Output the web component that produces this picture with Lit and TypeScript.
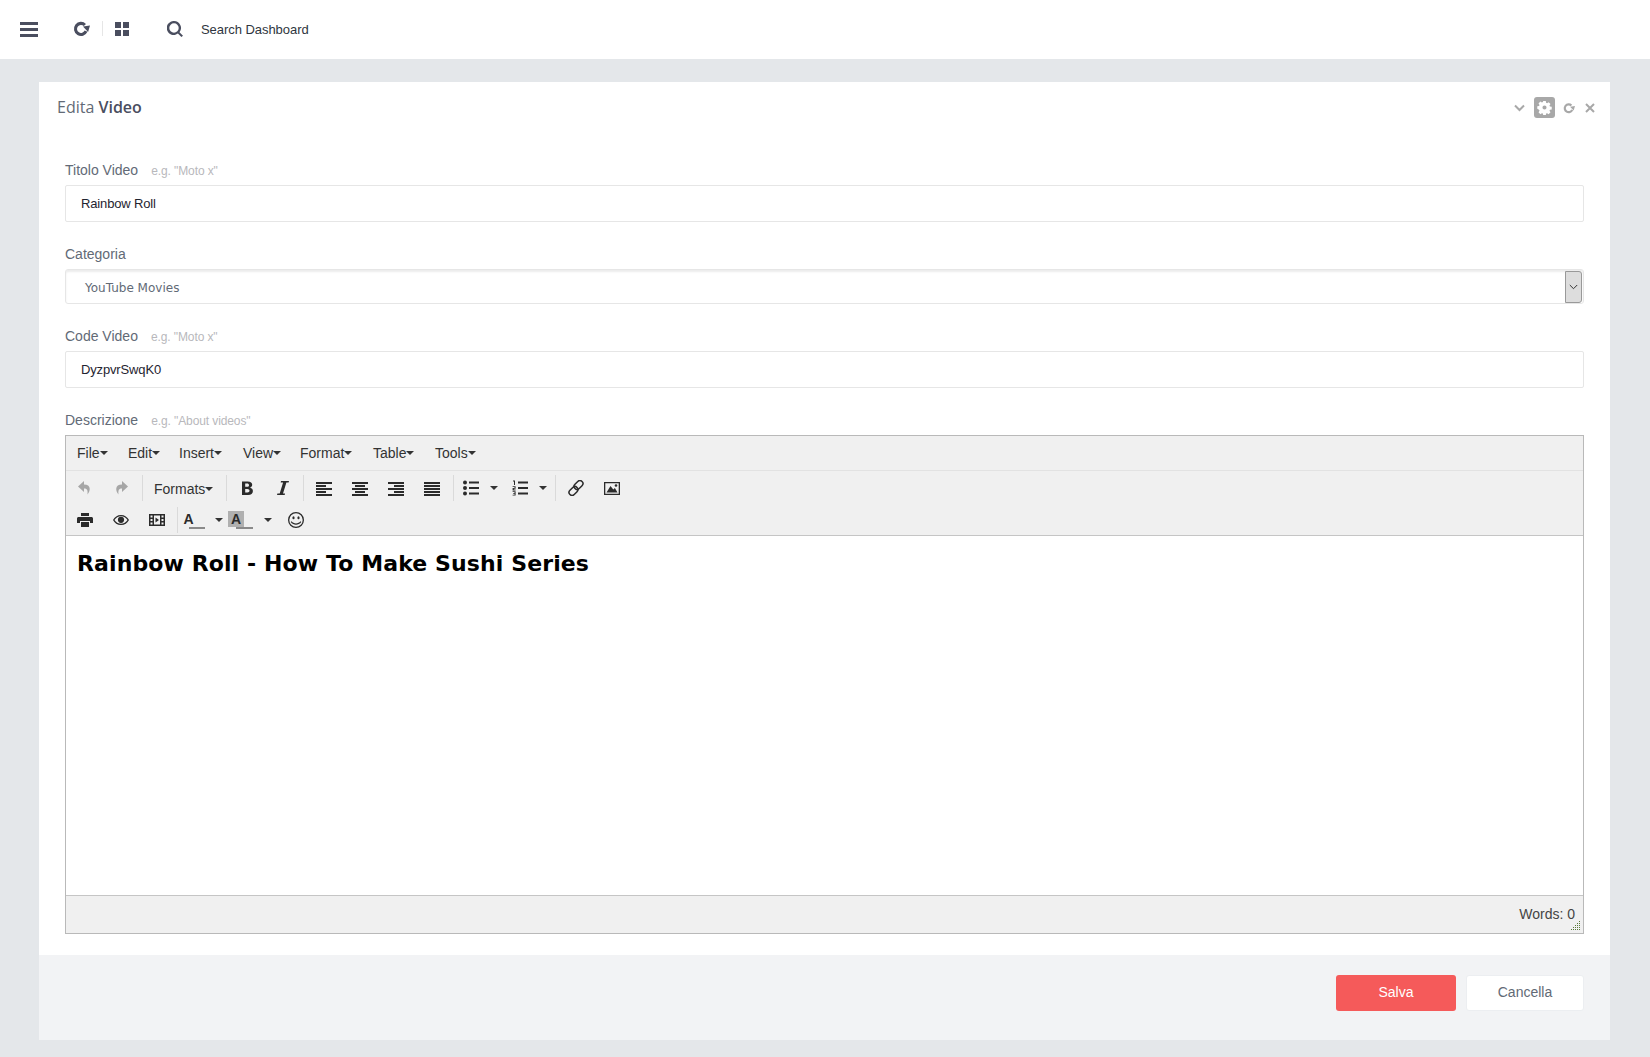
import { LitElement, html, css, svg } from "lit";
import { customElement } from "lit/decorators.js";

const ic = (size: number, body: unknown, cls = "") =>
  html`<svg class="ic ${cls}" width="${size}" height="${size}" viewBox="0 0 16 16" fill="currentColor">${body}</svg>`;

const bars = (rows: [number, number][]) =>
  rows.map(([x, w], i) => svg`<rect x="${x}" y="${2 + i * 3}" width="${w}" height="2"/>`);

const icons = {
  undo: svg`<path d="M7 1 1 6.500 7 12V8.500c3 0 4 1.500 3.500 6C13.500 11 14.500 4.500 7 4.500z"/>`,
  redo: svg`<path d="M9 1l6 5.500L9 12V8.500c-3 0-4 1.500-3.500 6C2.500 11 1.500 4.500 9 4.500z"/>`,
  bold: svg`<path fill-rule="evenodd" d="M3 1.500h5.700c3 0 4.500 1.300 4.500 3.300 0 1.500-.9 2.500-2.200 2.900 1.700.3 2.900 1.500 2.900 3.300 0 2.400-1.900 4-4.800 4H3zM6.200 3.600v3.200h1.900c1.200 0 1.900-.6 1.900-1.600s-.7-1.600-1.900-1.600zM6.200 8.900v3.500h2.200c1.300 0 2.100-.6 2.100-1.700s-.8-1.800-2.100-1.800z"/>`,
  italic: svg`<path d="M6 1h8l-.4 1.500h-2.200L8 13.500h2L9.700 15H2l.4-1.500h2.300l3.400-11H5.700z"/>`,
  left: bars([[0, 16], [0, 10], [0, 16], [0, 10], [0, 16]]),
  center: bars([[0, 16], [3, 10], [0, 16], [3, 10], [0, 16]]),
  right: bars([[0, 16], [6, 10], [0, 16], [6, 10], [0, 16]]),
  justify: bars([[0, 16], [0, 16], [0, 16], [0, 16], [0, 16]]),
  bullist: svg`<circle cx="2" cy="2.500" r="2"/><circle cx="2" cy="8" r="2"/><circle cx="2" cy="13.500" r="2"/><rect x="6" y="1.500" width="10" height="2"/><rect x="6" y="7" width="10" height="2"/><rect x="6" y="12.500" width="10" height="2"/>`,
  numlist: svg`<rect x="6" y="1.500" width="10" height="2"/><rect x="6" y="7" width="10" height="2"/><rect x="6" y="12.500" width="10" height="2"/><path d="M1 .6h2v4.400H2V1.600H1zM.6 6.200h3v2.600H1.800v.8h1.800v.8H.6V8h1.900v-.9H.6zM.6 11.200h3v4.400h-3v-.8h2v-1H1.200v-.8h1.300v-1H.6z"/>`,
  link: svg`<g fill="none" stroke="currentColor" stroke-width="1.500"><rect x="7.500" y="0" width="6" height="10" rx="3" transform="rotate(45 10.500 5)"/><rect x="2.500" y="6" width="6" height="10" rx="3" transform="rotate(45 5.500 11)"/></g>`,
  image: svg`<path fill-rule="evenodd" d="M0 2h16v13H0zM1.300 3.300v10.400h13.400V3.300z"/><path d="M2.500 12.500 6.500 6l2.800 3.500 1.600-1.500 2.600 4.500z"/><circle cx="12" cy="5.500" r="1.300"/>`,
  print: svg`<path fill-rule="evenodd" d="M4 1h8v3H4zM1.500 5h13c.8 0 1.500.7 1.500 1.500V11h-3V9H3v2H0V6.500C0 5.700.7 5 1.500 5zM4 10h8v5H4z"/>`,
  eye: svg`<path fill-rule="evenodd" d="M8 3c3.600 0 6.500 2 8 5-1.500 3-4.400 5-8 5s-6.500-2-8-5c1.500-3 4.400-5 8-5zM1.500 8C2.900 10.300 5.300 11.800 8 11.800s5.100-1.500 6.500-3.800C13.100 5.700 10.700 4.200 8 4.200S2.900 5.700 1.500 8z"/><circle cx="8" cy="7.800" r="3.100"/>`,
  media: svg`<path fill-rule="evenodd" d="M0 2h16v12H0zM1.500 3.500v2h2v-2zM1.500 7v2h2V7zM1.500 10.500v2h2v-2zM12.500 3.500v2h2v-2zM12.500 7v2h2V7zM12.500 10.500v2h2v-2zM5 3.500v9h6v-9z"/><path d="M6.500 5.500 10 8l-3.500 2.500z"/>`,
  emoji: svg`<path fill-rule="evenodd" d="M8 0a8 8 0 1 1 0 16A8 8 0 0 1 8 0zm0 1.300a6.700 6.700 0 1 0 0 13.400A6.700 6.700 0 0 0 8 1.300z"/><ellipse cx="5.500" cy="5.800" rx="1.100" ry="1.500"/><ellipse cx="10.500" cy="5.800" rx="1.100" ry="1.500"/><path d="M3.600 9.300c1 1.400 2.600 2.100 4.400 2.100s3.400-.7 4.400-2.100l.9.700C12 11.800 10.100 12.700 8 12.700S4 11.800 2.700 10z"/>`,
  repeat: svg`<path d="M12.300 10.500A5.200 5.200 0 1 1 11.200 4.700" fill="none" stroke="currentColor" stroke-width="2.900"/><path d="M9.400 6.200 16 5.200 14.200 11.200z"/>`,
  search: svg`<path fill-rule="evenodd" d="M7 0a7 7 0 0 1 5.500 11.300L16 14.800 14.400 16l-3.500-3.400A7 7 0 1 1 7 0zm0 2.300a4.700 4.700 0 1 0 0 9.400 4.700 4.700 0 0 0 0-9.400z"/>`,
  gear: svg`<path fill-rule="evenodd" d="M6.600 1h2.800l.3 1.900 1.100.5 1.600-1.100 2 2-1.100 1.600.5 1.100 1.900.3v2.800l-1.900.3-.5 1.100 1.100 1.600-2 2-1.600-1.100-1.100.5-.3 1.900H6.600l-.3-1.900-1.100-.5-1.600 1.100-2-2 1.100-1.600-.5-1.100L.3 9.400V6.600l1.900-.3.500-1.100L1.600 3.600l2-2 1.600 1.100 1.100-.5zM8 5.800a2.200 2.200 0 1 0 0 4.400 2.200 2.200 0 0 0 0-4.400z"/>`,
};

@customElement("app-root")
export class AppRoot extends LitElement {
  static styles = css`
    :host {
      display: block;
      height: 1057px;
      overflow: hidden;
      background: #e4e7ea;
      font-family: "Liberation Sans", Arial, sans-serif;
      color: #333;
    }
    .ic { display: block; flex: none; }
    .top {
      height: 59px;
      background: #fff;
      display: flex;
      align-items: center;
      padding-left: 20px;
      color: #4a4e5f;
      box-sizing: border-box;
    }
    .burger { width: 18px; height: 15px; display: flex; flex-direction: column; justify-content: space-between; }
    .burger i { display: block; height: 3px; background: #4a4e5f; }
    .top .refresh { margin-left: 35px; margin-top: -3px; }
    .top .vsep { width: 1px; height: 15px; background: #e6e6e6; margin: -2px 12px 0 12px; }
    .grid { width: 14px; height: 14px; display: grid; grid-template-columns: 6px 6px; grid-auto-rows: 6px; gap: 2px; margin-top: -2px; }
    .grid i { background: #4a4e5f; }
    .top .search { margin-left: 38px; margin-top: -1px; }
    .top span { margin-left: 18px; font-size: 13px; letter-spacing: -.05px; color: #2f3640; }

    main { padding: 23px 40px 0 39px; }
    .card { background: #fff; }
    .head {
      height: 78px;
      box-sizing: border-box;
      padding: 15px 15px 0 18px;
      display: flex;
      align-items: flex-start;
      justify-content: space-between;
    }
    .head h2 { margin: 0; font: 400 16px/20px "Open Sans", sans-serif; color: #626a76; }
    .head h2 b { font-weight: 600; color: #4a4e5f; }
    .tools { display: flex; align-items: center; color: #a8a8a8; height: 22px; margin-top: -1px; }
    .tools > svg { margin-top: 1px; }
    .gear { width: 21px; height: 21px; background: #a8a8a8; color: #fff; border-radius: 3px; display: flex; align-items: center; justify-content: center; margin: 0 8px 0 9px; }
    .tools .close { margin-left: 10px; }

    form { display: block; padding: 0 26px 21px; }
    .group { margin-bottom: 22px; }
    .group.last { margin-bottom: 0; }
    label { display: flex; align-items: center; height: 20px; margin-bottom: 5px; font-size: 14px; color: #626a76; }
    label small { font-size: 12px; color: #b8b8bc; margin: 1px 0 0 13px; letter-spacing: -.1px; }
    .input {
      display: block;
      width: 100%;
      height: 37px;
      box-sizing: border-box;
      border: 1px solid #e6e6e6;
      border-radius: 2px;
      padding: 0 15px;
      font: 13px "Liberation Sans", sans-serif;
      letter-spacing: -.15px;
      color: #1f2430;
      background: #fff;
      outline: none;
    }
    .select {
      height: 35px;
      box-sizing: border-box;
      border: 1px solid #e6e6e6;
      border-radius: 3px;
      box-shadow: inset 0 2px 2px #ececec;
      display: flex;
      align-items: center;
      padding: 0 1px 0 19px;
      font: 12px "DejaVu Sans", sans-serif;
      color: #626a76;
    }
    .select span { flex: 1; padding-top: 2px; }
    .select .arrow {
      width: 17px;
      height: 32px;
      box-sizing: border-box;
      background: #ddd;
      border: 1px solid #999;
      border-radius: 0 3px 3px 0;
      display: flex;
      align-items: center;
      justify-content: center;
    }

    .editor { height: 499px; box-sizing: border-box; border: 1px solid #b9b9b9; display: flex; flex-direction: column; background: #fff; }
    .menu { height: 35px; box-sizing: border-box; background: #f0f0f0; border-bottom: 1px solid #e2e2e2; display: flex; align-items: center; padding-left: 11px; flex: none; }
    .menu div { display: flex; align-items: center; font-size: 14px; color: #333; }
    .caret { display: inline-block; width: 0; height: 0; border: 4px solid transparent; border-top-color: #333; border-bottom: 0; }
    .bars { flex: none; background: #f0f0f0; border-bottom: 1px solid #c5c5c5; box-sizing: border-box; height: 65px; padding-top: 1px; }
    .row { height: 32px; display: flex; align-items: center; padding-left: 1px; color: #2b2b2b; }
    .row button {
      all: unset;
      display: flex;
      align-items: center;
      justify-content: center;
      width: 36px;
      height: 28px;
      flex: none;
      position: relative;
    }
    .row .dis { color: #a6a6a6; }
    .row .split { width: 30px; }
    .row .first { width: 31px; }
    .row .wide { width: 33px; }
    .row .dd { width: 16px; }
    .sep { width: 1px; height: 26px; background: #dadada; margin: 0 2px; flex: none; }
    .sep.w { margin-left: 3px; }
    .sep.x { margin-left: 4px; }
    .row .fmt { width: 79px; font-size: 14px; color: #333; padding: 1px 0 0 9px; box-sizing: border-box; justify-content: flex-start; }
    .row .color { font: 700 14px/16px "Liberation Sans", sans-serif; }
    .gap3 { width: 3px; flex: none; }
    .gap2 { width: 2px; flex: none; }
    .fore { width: 21px; height: 18px; position: relative; color: #2b2b2b; margin-left: -3px; }
    .fore u { position: absolute; left: 0; top: 0; text-decoration: none; line-height: 16px; }
    .fore i { position: absolute; left: 5px; right: 0; bottom: 0; height: 2px; background: #8a8a8a; }
    .back { width: 25px; height: 18px; position: relative; margin-left: -6px; }
    .back em { position: absolute; left: 0; top: 0; width: 16px; height: 16px; background: #b0b0b0; }
    .back u { position: absolute; left: 3px; top: 0; text-decoration: none; line-height: 16px; }
    .back i { position: absolute; left: 8px; right: 0; bottom: 0; height: 2px; background: #8a8a8a; }
    .content { flex: 1; padding: 12px 11px; font: 700 22px/32px "DejaVu Sans", sans-serif; letter-spacing: .11px; color: #000; }
    .status { height: 38px; flex: none; box-sizing: border-box; background: #f0f0f0; border-top: 1px solid #c5c5c5; font-size: 14px; color: #444; display: flex; justify-content: flex-end; padding: 10px 8px 0 0; position: relative; }
    .grip { position: absolute; right: 2px; bottom: 2px; }

    .foot { height: 85px; box-sizing: border-box; background: #f2f3f5; padding: 20px 26px; display: flex; justify-content: flex-end; gap: 10px; }
    .foot button { height: 36px; box-sizing: border-box; border: 0; padding: 0 0 2px; border-radius: 3px; font: 14px "Liberation Sans", sans-serif; text-align: center; }
    .foot .save { width: 120px; background: #f55a5a; color: #fff; }
    .foot .cancel { width: 118px; background: #fff; color: #626a76; border: 1px solid #eceef1; }
  `;

  private menu() {
    const items: [string, number][] = [["File", 51], ["Edit", 51], ["Insert", 64], ["View", 57], ["Format", 73], ["Table", 62], ["Tools", 50]];
    return items.map(([t, w]) => html`<div style="width:${w}px">${t}<span class="caret"></span></div>`);
  }

  render() {
    const dd = html`<button class="dd"><span class="caret"></span></button>`;
    return html`
      <header class="top">
        <div class="burger"><i></i><i></i><i></i></div>
        ${ic(17, icons.repeat, "refresh")}
        <div class="vsep"></div>
        <div class="grid"><i></i><i></i><i></i><i></i></div>
        ${ic(16, icons.search, "search")}
        <span>Search Dashboard</span>
      </header>
      <main>
        <section class="card">
          <div class="head">
            <h2>Edita <b>Video</b></h2>
            <div class="tools">
              <svg width="11" height="8" viewBox="0 0 11 8" fill="none" stroke="currentColor" stroke-width="2"><path d="M1 1.500l4.500 4.500L10 1.500"/></svg>
              <div class="gear">${ic(15, icons.gear)}</div>
              ${ic(12, icons.repeat)}
              <svg class="close" width="10" height="10" viewBox="0 0 10 10" fill="none" stroke="currentColor" stroke-width="2"><path d="M1 1l8 8M9 1l-8 8"/></svg>
            </div>
          </div>
          <form>
            <div class="group">
              <label>Titolo Video<small>e.g. "Moto x"</small></label>
              <input class="input" value="Rainbow Roll" />
            </div>
            <div class="group">
              <label>Categoria</label>
              <div class="select">
                <span>YouTube Movies</span>
                <div class="arrow"><svg width="9" height="6" viewBox="0 0 9 6" fill="none" stroke="#333" stroke-width="1"><path d="M.8 1l3.700 3.700L8.200 1"/></svg></div>
              </div>
            </div>
            <div class="group">
              <label>Code Video<small>e.g. "Moto x"</small></label>
              <input class="input" value="DyzpvrSwqK0" />
            </div>
            <div class="group last">
              <label>Descrizione<small>e.g. "About videos"</small></label>
              <div class="editor">
                <div class="menu">${this.menu()}</div>
                <div class="bars">
                  <div class="row">
                    <button class="dis">${ic(16, icons.undo)}</button>
                    <button class="dis">${ic(16, icons.redo)}</button>
                    <div class="sep w"></div>
                    <button class="fmt">Formats<span class="caret"></span></button>
                    <div class="sep"></div>
                    <button>${ic(16, icons.bold)}</button>
                    <button>${ic(16, icons.italic)}</button>
                    <div class="sep"></div>
                    <button>${ic(16, icons.left)}</button>
                    <button>${ic(16, icons.center)}</button>
                    <button>${ic(16, icons.right)}</button>
                    <button>${ic(16, icons.justify)}</button>
                    <div class="sep w"></div>
                    <button class="split">${ic(16, icons.bullist)}</button>
                    ${dd}
                    <span class="gap3"></span>
                    <button class="split">${ic(16, icons.numlist)}</button>
                    ${dd}
                    <div class="sep x"></div>
                    <button>${ic(16, icons.link)}</button>
                    <button>${ic(16, icons.image)}</button>
                  </div>
                  <div class="row">
                    <button>${ic(16, icons.print)}</button>
                    <button>${ic(16, icons.eye)}</button>
                    <button>${ic(16, icons.media)}</button>
                    <div class="sep"></div>
                    <button class="first color"><span class="fore"><u>A</u><i></i></span></button>
                    ${dd}
                    <button class="wide color"><span class="back"><em></em><u>A</u><i></i></span></button>
                    ${dd}
                    <span class="gap2"></span>
                    <button>${ic(16, icons.emoji)}</button>
                  </div>
                </div>
                <div class="content">Rainbow Roll - How To Make Sushi Series</div>
                <div class="status">
                  Words: 0
                  <svg class="grip" width="10" height="10" viewBox="0 0 10 10" fill="#5a7a3a">
                    ${[[8, 0], [6, 2], [8, 2], [4, 4], [6, 4], [8, 4], [2, 6], [4, 6], [6, 6], [8, 6], [0, 8], [2, 8], [4, 8], [6, 8], [8, 8]].map(([x, y]) => svg`<rect x="${x}" y="${y}" width="1" height="1"/>`)}
                  </svg>
                </div>
              </div>
            </div>
          </form>
          <div class="foot">
            <button class="save">Salva</button>
            <button class="cancel">Cancella</button>
          </div>
        </section>
      </main>
    `;
  }
}
